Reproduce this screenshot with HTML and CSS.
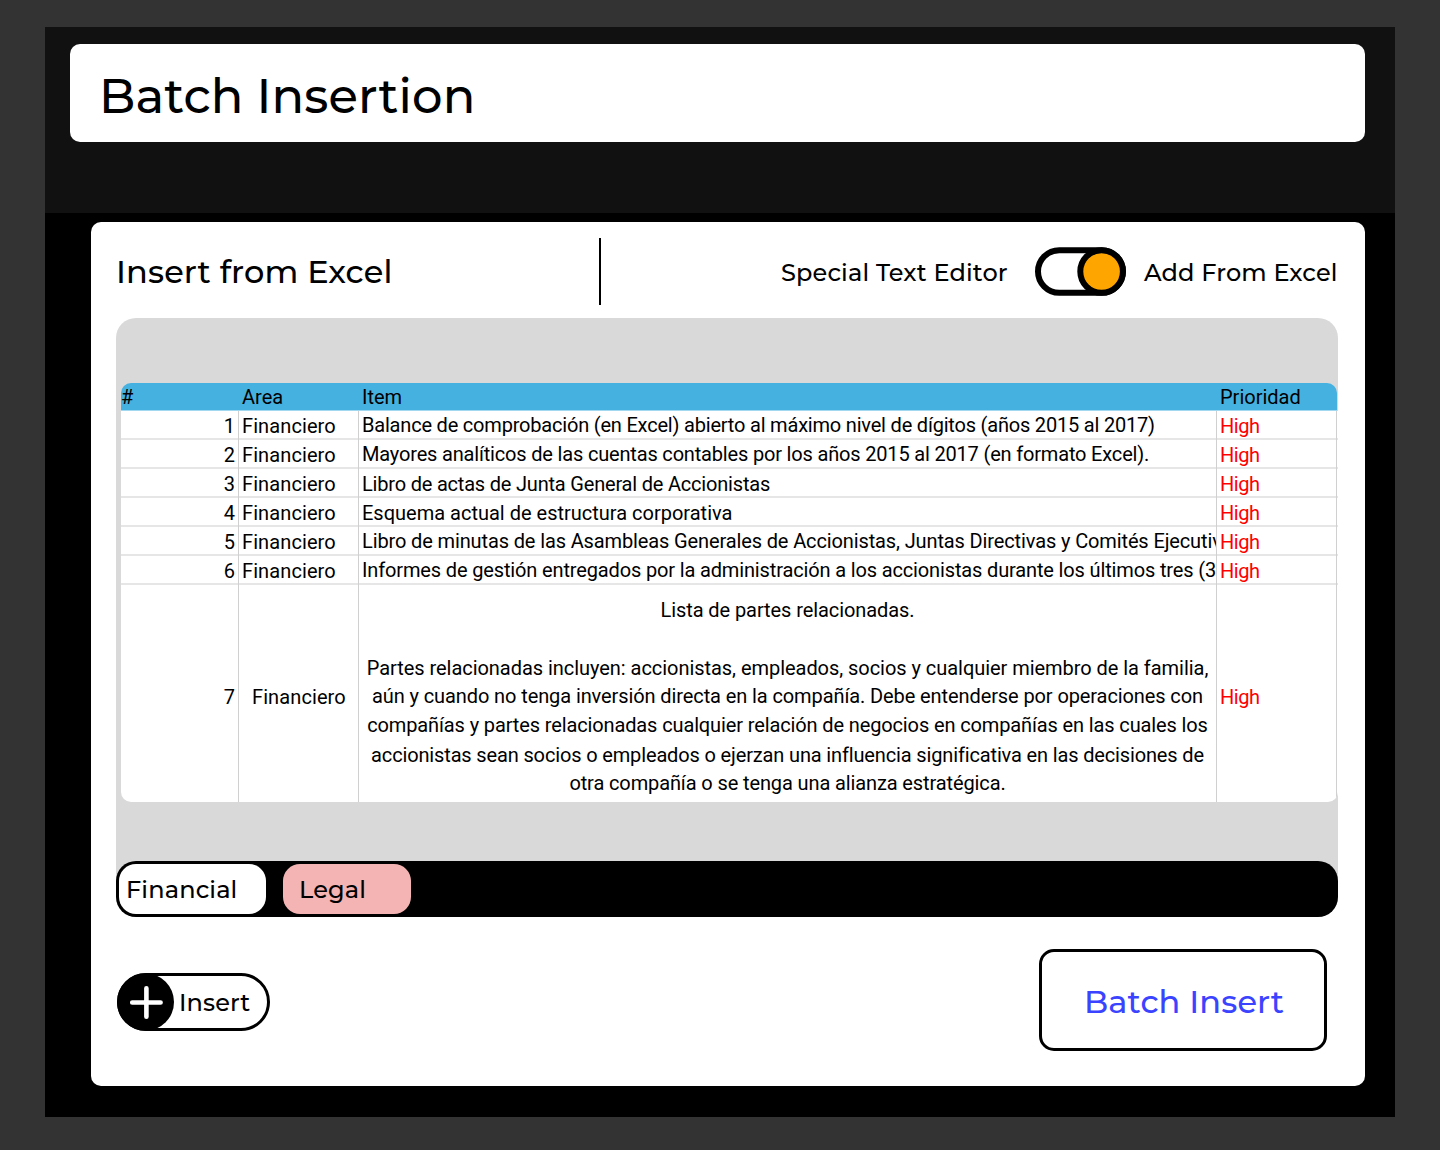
FILE: index.html
```html
<!DOCTYPE html>
<html lang="en">
<head>
<meta charset="utf-8">
<title>Batch Insertion</title>
<link rel="stylesheet" href="styles.css">
</head>
<body>
<div class="app">
  <header class="topbar">
    <div class="title-card"><h1 class="page-title">Batch Insertion</h1></div>
  </header>
  <main class="panel">
    <div class="panel-head">
      <h2 class="panel-title">Insert from Excel</h2>
      <div class="divider"></div>
      <div class="mode">
        <span class="mode-label mode-text">Special Text Editor</span>
        <svg class="toggle" width="92" height="50" viewBox="0 0 92 50" aria-hidden="true">
          <rect x="3" y="3.2" width="85" height="42.6" rx="21.3" fill="#fff" stroke="#000" stroke-width="6"/>
          <circle cx="66.6" cy="24.5" r="21.3" fill="#ffa500" stroke="#000" stroke-width="6"/>
        </svg>
        <span class="mode-label mode-excel">Add From Excel</span>
      </div>
    </div>

    <section class="sheet">
      <div class="table">
        <div class="row head">
          <div class="cell">#</div><div class="cell">Area</div><div class="cell">Item</div><div class="cell">Prioridad</div>
        </div>
        <div class="row">
          <div class="cell num">1</div><div class="cell area">Financiero</div>
          <div class="cell item tight">Balance de comprobación (en Excel) abierto al máximo nivel de dígitos (años 2015 al 2017)</div><div class="cell high">High</div>
        </div>
        <div class="row">
          <div class="cell num">2</div><div class="cell area">Financiero</div>
          <div class="cell item snug">Mayores analíticos de las cuentas contables por los años 2015 al 2017 (en formato Excel).</div><div class="cell high">High</div>
        </div>
        <div class="row">
          <div class="cell num">3</div><div class="cell area">Financiero</div>
          <div class="cell item tight low">Libro de actas de Junta General de Accionistas</div><div class="cell high">High</div>
        </div>
        <div class="row">
          <div class="cell num">4</div><div class="cell area">Financiero</div>
          <div class="cell item low">Esquema actual de estructura corporativa</div><div class="cell high">High</div>
        </div>
        <div class="row">
          <div class="cell num">5</div><div class="cell area">Financiero</div>
          <div class="cell item close">Libro de minutas de las Asambleas Generales de Accionistas, Juntas Directivas y Comités Ejecutiv</div><div class="cell high">High</div>
        </div>
        <div class="row">
          <div class="cell num">6</div><div class="cell area">Financiero</div>
          <div class="cell item near">Informes de gestión entregados por la administración a los accionistas durante los últimos tres (3</div><div class="cell high">High</div>
        </div>
        <div class="row tall">
          <div class="cell num">7</div><div class="cell area">Financiero</div>
          <div class="cell item note">
            <p class="line line-a">Lista de partes relacionadas.</p>
            <p class="line line-b">Partes relacionadas incluyen: accionistas, empleados, socios y cualquier miembro de la familia,</p>
            <p class="line line-c">aún y cuando no tenga inversión directa en la compañía. Debe entenderse por operaciones con</p>
            <p class="line line-d close">compañías y partes relacionadas cualquier relación de negocios en compañías en las cuales los</p>
            <p class="line line-e close">accionistas sean socios o empleados o ejerzan una influencia significativa en las decisiones de</p>
            <p class="line line-f">otra compañía o se tenga una alianza estratégica.</p>
          </div>
          <div class="cell high">High</div>
        </div>
      </div>
      <nav class="tabs">
        <span class="tab tab-active">Financial</span>
        <span class="tab tab-legal">Legal</span>
      </nav>
    </section>

    <footer class="actions">
      <button class="insert" type="button">
        <svg class="plus" width="57" height="58" viewBox="0 0 57 58" aria-hidden="true">
          <ellipse cx="28.5" cy="29" rx="28.5" ry="28.7" fill="#000"/>
          <path d="M29.4 15.3V43.7M15.2 29.5H43.6" stroke="#fff" stroke-width="4.6" stroke-linecap="round"/>
        </svg>
        <span class="insert-label">Insert</span>
      </button>
      <button class="batch" type="button">Batch Insert</button>
    </footer>
  </main>
</div>
</body>
</html>
```
FILE: styles.css
```css
* { box-sizing: border-box; }

body {
  margin: 0;
  min-height: 1150px;
  padding: 27px 45px 33px;
  background: #333;
  color: #000;
  font-family: Montserrat, Inter, sans-serif;
  font-weight: 500;
  letter-spacing: .13px;
}

h1, h2, p { margin: 0; font-weight: inherit; }

button {
  margin: 0;
  padding: 0;
  background: #fff;
  border: 3px solid #000;
  font: inherit;
  letter-spacing: inherit;
}

.app { height: 1090px; background: #000; }

.topbar { height: 186px; padding: 17px 30px 0 25px; background: #111; }

.title-card {
  display: flex;
  align-items: center;
  height: 98px;
  padding: 6px 0 0 29px;
  background: #fff;
  border-radius: 10px;
}

.page-title { font-size: 48px; line-height: 60px; }

.panel {
  height: 864px;
  margin: 9px 30px 0 46px;
  padding: 0 27px 0 25px;
  background: #fff;
  border-radius: 10px;
}

.panel-head { display: flex; height: 96px; padding-top: 16px; }

.panel-title {
  flex: none;
  width: 483px;
  font-size: 32px;
  line-height: 67px;
}

.divider { flex: none; width: 2px; height: 67px; background: #000; }

.mode {
  display: flex;
  flex: 1;
  padding-left: 180px;
  font-size: 24px;
  line-height: 69px;
  white-space: nowrap;
}

.mode-text { flex: none; width: 254px; letter-spacing: .15px; }
.mode-excel { margin-left: 17px; }
.toggle { flex: none; margin-top: 8.8px; }

.sheet {
  display: flex;
  flex-direction: column;
  height: 599px;
  padding-top: 65px;
  background: #d9d9d9;
  border-radius: 20px;
}

.table {
  width: 1217px;
  height: 419px;
  margin-left: 5px;
  overflow: hidden;
  border-radius: 10px 0 10px 10px;
  font-family: Roboto, sans-serif;
  font-size: 20px;
  font-weight: 400;
  letter-spacing: 0;
}

.row {
  display: grid;
  grid-template-columns: 118px 120px 858px 120px;
  height: 29px;
  background: linear-gradient(#e6e6e6, #e6e6e6) 0 100% / 100% 2px no-repeat #fff;
  line-height: 28px;
  white-space: nowrap;
}

.cell { padding-left: 3px; border-right: 1px solid #d0d0d0; overflow: hidden; }

.head {
  width: 1216px;
  height: 28px;
  background: #45b1e1;
  border-bottom: 1px solid #a2d8f0;
  border-radius: 0 10px 0 0;
}
.head .cell { border: 0; }
.head .cell:first-child { padding-left: 0; }

.num { padding: 1px 3px 0 0; text-align: right; }
.area { padding-top: 1px; letter-spacing: .1px; }
.high { padding-top: 1px; color: #f00; letter-spacing: -.45px; }

.tight { letter-spacing: -.197px; }
.snug { letter-spacing: -.175px; }
.near { letter-spacing: -.143px; }
.close { letter-spacing: -.126px; }
.low { padding-top: 1px; }

.tall { height: 217px; background: #fff; line-height: 218px; }
.tall .num, .tall .area, .tall .high { padding-top: 3px; }
.tall .area { padding-left: 13px; }

.note { padding: 11px 0 0; line-height: 28px; text-align: center; }
.line-a { letter-spacing: -.08px; }
.line-b { margin-top: 30px; letter-spacing: -.045px; }
.line-c { letter-spacing: -.1px; }
.line-d { margin-top: 1px; }
.line-e { margin-top: 2px; letter-spacing: -.145px; }
.line-f { letter-spacing: -.116px; }

.tabs {
  display: flex;
  gap: 17px;
  height: 56px;
  margin-top: auto;
  padding: 3px;
  background: #000;
  border-radius: 20px;
  font-size: 24px;
  line-height: 51px;
}

.tab { height: 50px; border-radius: 17px; }
.tab-active { width: 147px; padding-left: 7px; background: #fff; }
.tab-legal { width: 128px; padding-left: 16px; background: #f4b4b4; }

.actions { display: flex; justify-content: space-between; padding: 32px 11px 0 1px; }

.insert {
  display: flex;
  width: 153px;
  height: 58px;
  margin-top: 24px;
  border-radius: 29px;
  color: #000;
  font-size: 24px;
  line-height: 53px;
}

.plus { flex: none; margin: -3px 0 0 -3px; }
.insert-label { margin-left: 5px; }

.batch {
  display: flex;
  align-items: flex-start;
  width: 288px;
  height: 102px;
  padding-left: 42px;
  border-radius: 15px;
  color: #3a43ff;
  font-size: 32px;
  line-height: 99px;
}
```
